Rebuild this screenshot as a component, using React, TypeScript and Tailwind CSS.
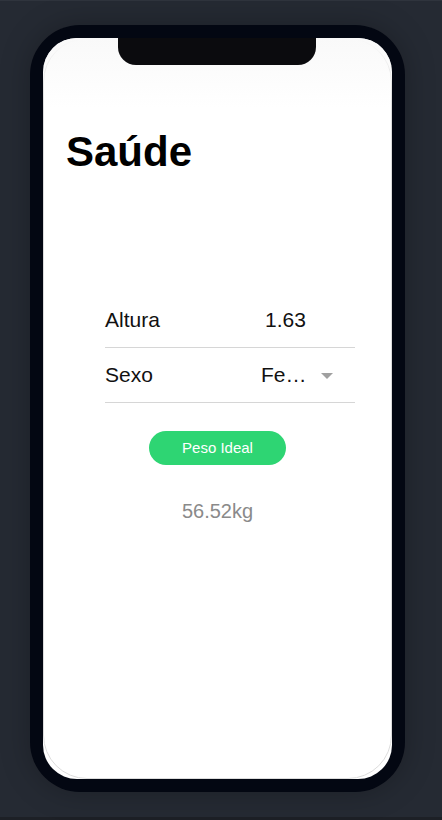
export default function App() {
    return (
        <div className="min-h-[820px] bg-[#1d2026]">
            <div className="h-[817px] border-t border-[#2f343d] bg-[#252a33] pl-[30px] pt-[24px]">
                {/* phone frame */}
                <div className="relative h-[767px] w-[375px] rounded-[50px] bg-[#030712] p-[13px] shadow-[0_0_30px_rgba(0,0,0,0.25)]">
                    <div className="relative h-full w-full overflow-hidden rounded-[34px] bg-white font-['Liberation_Sans',Arial,sans-serif]">
                        <div className="pointer-events-none absolute inset-0 rounded-[44px] border border-[#dcdcdc]"></div>
                        <div className="pointer-events-none absolute inset-x-0 top-0 h-[70px] bg-gradient-to-b from-[#f9f9f9] to-white/0"></div>
                        {/* notch */}
                        <div className="absolute left-[75px] top-0 h-[27px] w-[198px] rounded-b-[18px] bg-[#0b0b0e]"></div>

                        <div className="relative flex flex-col">
                            <h1 className="mt-[93px] pl-[23px] text-[42px] font-bold leading-[42px] text-black">Saúde</h1>

                            <div className="ml-[62px] mt-[119px] w-[250px] text-[21px] leading-6 text-[#111]">
                                <div className="flex h-[56px] items-center border-b border-[#d6d6d6]">
                                    <span className="w-[156px]">Altura</span>
                                    <span className="pl-[4px]">1.63</span>
                                </div>
                                <div className="flex h-[55px] items-center border-b border-[#d6d6d6]">
                                    <span className="w-[156px]">Sexo</span>
                                    <span className="w-[60px]">Fe…</span>
                                    <span className="mt-[2px] h-0 w-0 border-x-[6px] border-t-[6px] border-x-transparent border-t-[#a0a0a0]"></span>
                                </div>
                            </div>

                            <button className="mx-auto mt-[28px] h-[34px] w-[137px] rounded-full bg-[#2ed573] text-[15px] text-white">
                                Peso Ideal
                            </button>

                            <p className="mt-[34px] text-center text-[20px] leading-6 text-[#8a8a8a]">56.52kg</p>
                        </div>
                    </div>
                </div>
            </div>
        </div>
    );
}
